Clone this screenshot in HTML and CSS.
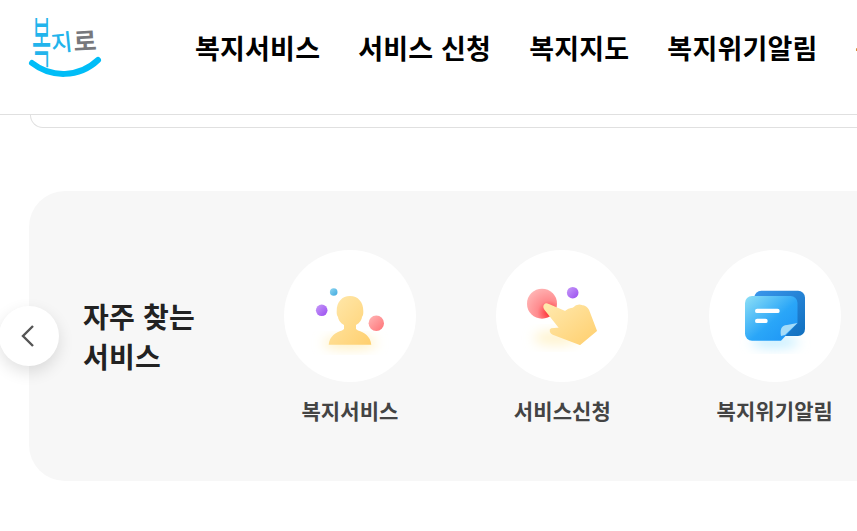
FILE: index.html
```html
<!DOCTYPE html>
<html lang="ko">
<head>
    <meta charset="UTF-8">
    <meta name="viewport" content="width=device-width, initial-scale=1.0">
    <title>복지로</title>
    <link rel="stylesheet" href="styles.css">
</head>
<body>
    <header class="site-header">
        <a class="logo" href="#">
            <svg width="80" height="70" viewBox="0 0 80 70">
                <g class="logo-text">
                    <text class="logo-blue logo-tall" transform="translate(3 47) scale(.8 2.1)" font-size="26">복</text>
                    <text class="logo-blue" transform="translate(23 37) rotate(-6)" font-size="23">지</text>
                    <text class="logo-gray" transform="translate(45 36) rotate(-3)" font-size="25">로</text>
                </g>
                <path class="logo-smile" d="M3 48 C 22 63 50 63 69 45"/>
            </svg>
        </a>
        <nav class="main-nav">
            <a href="#">복지서비스</a>
            <a href="#">서비스 신청</a>
            <a href="#">복지지도</a>
            <a href="#">복지위기알림</a>
            <a href="#">복지소식</a>
        </nav>
    </header>

    <div class="search-peek"></div>

    <section class="quick-panel">
        <button class="prev-btn" aria-label="이전">
            <svg width="16" height="24" viewBox="0 0 16 24"><path d="M13 2 L3 12 L13 22"/></svg>
        </button>
        <h2 class="quick-title">자주 찾는<br>서비스</h2>
        <ul class="quick-list">
            <li class="quick-item">
                <div class="quick-circle">
                    <svg width="132" height="132" viewBox="0 0 132 132">
                        <defs>
                            <filter id="blur1" x="-50%" y="-50%" width="200%" height="200%"><feGaussianBlur stdDeviation="6"/></filter>
                            <linearGradient id="yellow1" x1="0" y1="0" x2="1" y2="1"><stop offset="0" stop-color="#ffe9ae"/><stop offset="1" stop-color="#ffcf6e"/></linearGradient>
                            <linearGradient id="red1" x1="0" y1="0" x2="1" y2="1"><stop offset="0" stop-color="#ffb6b6"/><stop offset="1" stop-color="#ff7276"/></linearGradient>
                            <linearGradient id="purple1" x1="0" y1="0" x2="1" y2="1"><stop offset="0" stop-color="#c79bf8"/><stop offset="1" stop-color="#9a4df0"/></linearGradient>
                            <linearGradient id="sky1" x1="0" y1="0" x2="1" y2="1"><stop offset="0" stop-color="#8fd6f0"/><stop offset="1" stop-color="#3fa9e0"/></linearGradient>
                        </defs>
                        <ellipse cx="66" cy="93" rx="27" ry="6" fill="#fff0c0" filter="url(#blur1)"/>
                        <circle cx="49.7" cy="42" r="3.8" fill="url(#sky1)"/>
                        <circle cx="37.7" cy="60.3" r="5.8" fill="url(#purple1)"/>
                        <circle cx="92.3" cy="73.3" r="7.7" fill="url(#red1)"/>
                        <path fill="url(#yellow1)" d="M44.7 94.7 C45.5 86 52 82.5 58 80.5 L60 79 L60 75 C56 73 54 69 54 67 C52.5 65 52.7 63 52.7 61 C52.7 52 58 46 66 46 C74 46 79.3 52 79.3 61 C79.3 63 79.5 65 78 67 C78 69 76 73 72 75 L72 79 L74 80.5 C80 82.5 86.5 86 87.3 94.7 Z"/>
                    </svg>
                </div>
                <span class="quick-label">복지서비스</span>
            </li>
            <li class="quick-item">
                <div class="quick-circle">
                    <svg width="132" height="132" viewBox="0 0 132 132">
                        <defs>
                            <radialGradient id="red2" cx=".75" cy=".8" r=".9"><stop offset="0" stop-color="#ff2a2e"/><stop offset=".45" stop-color="#ff8b8e"/><stop offset="1" stop-color="#ffb4b4"/></radialGradient>
                        </defs>
                        <ellipse cx="60" cy="88" rx="22" ry="7" fill="#fff3cc" filter="url(#blur1)"/>
                        <circle cx="46" cy="53.7" r="15" fill="url(#red2)"/>
                        <circle cx="76.7" cy="42.7" r="5.8" fill="url(#purple1)"/>
                        <path fill="url(#yellow1)" stroke="url(#yellow1)" stroke-width="1.5" stroke-linejoin="round" d="M52 54.5 L69 61.7 C72 59 75 58.5 77.3 58.3 C79.5 56 83 54.8 85.7 55.7 C88 56 91 57.5 92.3 60 L100.2 80.7 L84 94.2 L57 84 C54.5 83 53.5 80 55.5 79 L64 78.3 L48.8 59 C46.8 55.5 49.5 53 52 54.5 Z"/>
                    </svg>
                </div>
                <span class="quick-label">서비스신청</span>
            </li>
            <li class="quick-item">
                <div class="quick-circle">
                    <svg width="132" height="132" viewBox="0 0 132 132">
                        <defs>
                            <linearGradient id="back3" x1="0" y1="0" x2="1" y2="1"><stop offset="0" stop-color="#3a96ec"/><stop offset="1" stop-color="#0f6fbe"/></linearGradient>
                            <linearGradient id="front3" x1="0" y1="0" x2="1" y2="1"><stop offset="0" stop-color="#8fe0f6"/><stop offset=".55" stop-color="#2aa6f8"/><stop offset="1" stop-color="#1c93f5"/></linearGradient>
                        </defs>
                        <ellipse cx="66" cy="92" rx="24" ry="6" fill="#c4eeff" filter="url(#blur1)"/>
                        <rect x="45.3" y="40.7" width="50.7" height="45.3" rx="7" fill="url(#back3)"/>
                        <path fill="url(#front3)" d="M43 46 H81.5 a7 7 0 0 1 7 7 V73 L72 90.7 H43 a7 7 0 0 1 -7 -7 V53 a7 7 0 0 1 7 -7 Z"/>
                        <path fill="#a5dcf8" d="M72 86 C71 80 72 75 78 75 L88.5 73 L76 85 Z"/>
                        <rect x="46" y="58.7" width="24.7" height="4.4" rx="2.2" fill="#fff"/>
                        <rect x="46" y="68.7" width="12.7" height="4.4" rx="2.2" fill="#fff"/>
                    </svg>
                </div>
                <span class="quick-label">복지위기알림</span>
            </li>
        </ul>
    </section>
</body>
</html>
```

FILE: styles.css
```css
html, body {
    overflow: hidden;
}
body {
    margin: 0;
    height: 531px;
    background-color: #fff;
    font-family: "Noto Sans CJK KR", "Noto Sans", sans-serif;
    color: #111;
}
a {
    color: inherit;
    text-decoration: none;
}
ul {
    margin: 0;
    padding: 0;
    list-style: none;
}

/* header */
.site-header {
    display: flex;
    align-items: center;
    height: 114px;
    padding-left: 29px;
    border-bottom: 1px solid #e0e0e0;
    box-sizing: content-box;
}
.logo {
    display: block;
    flex: none;
    width: 80px;
    height: 70px;
    margin-top: -14px;
}
.logo svg {
    display: block;
    overflow: visible;
}
.logo-text {
    font-family: "Noto Sans CJK KR", sans-serif;
    font-weight: 500;
}
.logo-blue {
    fill: #22b4ec;
}
.logo-tall {
    font-weight: 400;
}
.logo-gray {
    fill: #77787c;
    font-weight: 700;
}
.logo-smile {
    fill: none;
    stroke: #00bdf7;
    stroke-width: 6;
    stroke-linecap: round;
}
.main-nav {
    display: flex;
    flex: none;
    gap: 38px;
    margin-left: 86px;
    margin-top: -19px;
    font-size: 27px;
    font-weight: 700;
    letter-spacing: 0.2px;
    color: #000;
    white-space: nowrap;
}

.search-peek {
    height: 12px;
    margin: 0 -30px 0 30px;
    border: 1px solid #e0e0e0;
    border-top: none;
    border-radius: 0 0 20px 20px;
}

/* quick services */
.quick-panel {
    position: relative;
    display: flex;
    align-items: center;
    width: 900px;
    height: 290px;
    margin: 63px 0 0 29px;
    padding-left: 54px;
    background-color: #f7f7f7;
    border-radius: 36px;
    box-sizing: border-box;
}
.prev-btn {
    position: absolute;
    left: -30px;
    top: 115px;
    display: flex;
    align-items: center;
    justify-content: center;
    width: 60px;
    height: 60px;
    padding: 0 3px 0 0;
    background-color: #fff;
    border: none;
    border-radius: 50%;
    box-shadow: 0 6px 16px rgba(0, 0, 0, 0.12);
    cursor: pointer;
}
.prev-btn path {
    fill: none;
    stroke: #555;
    stroke-width: 2.4;
}
.quick-title {
    flex: none;
    width: 201px;
    margin: 0;
    font-size: 28px;
    font-weight: 700;
    letter-spacing: 0.2px;
    line-height: 40px;
    color: #222;
}
.quick-list {
    display: flex;
    gap: 80.4px;
    padding-top: 5px;
}
.quick-item {
    display: flex;
    flex-direction: column;
    align-items: center;
    width: 132px;
}
.quick-circle {
    width: 132px;
    height: 132px;
    background-color: #fff;
    border-radius: 50%;
}
.quick-circle svg {
    display: block;
}
.quick-label {
    margin-top: 11px;
    font-size: 21px;
    font-weight: 700;
    letter-spacing: 0.1px;
    line-height: 34px;
    color: #444;
    white-space: nowrap;
}
```
